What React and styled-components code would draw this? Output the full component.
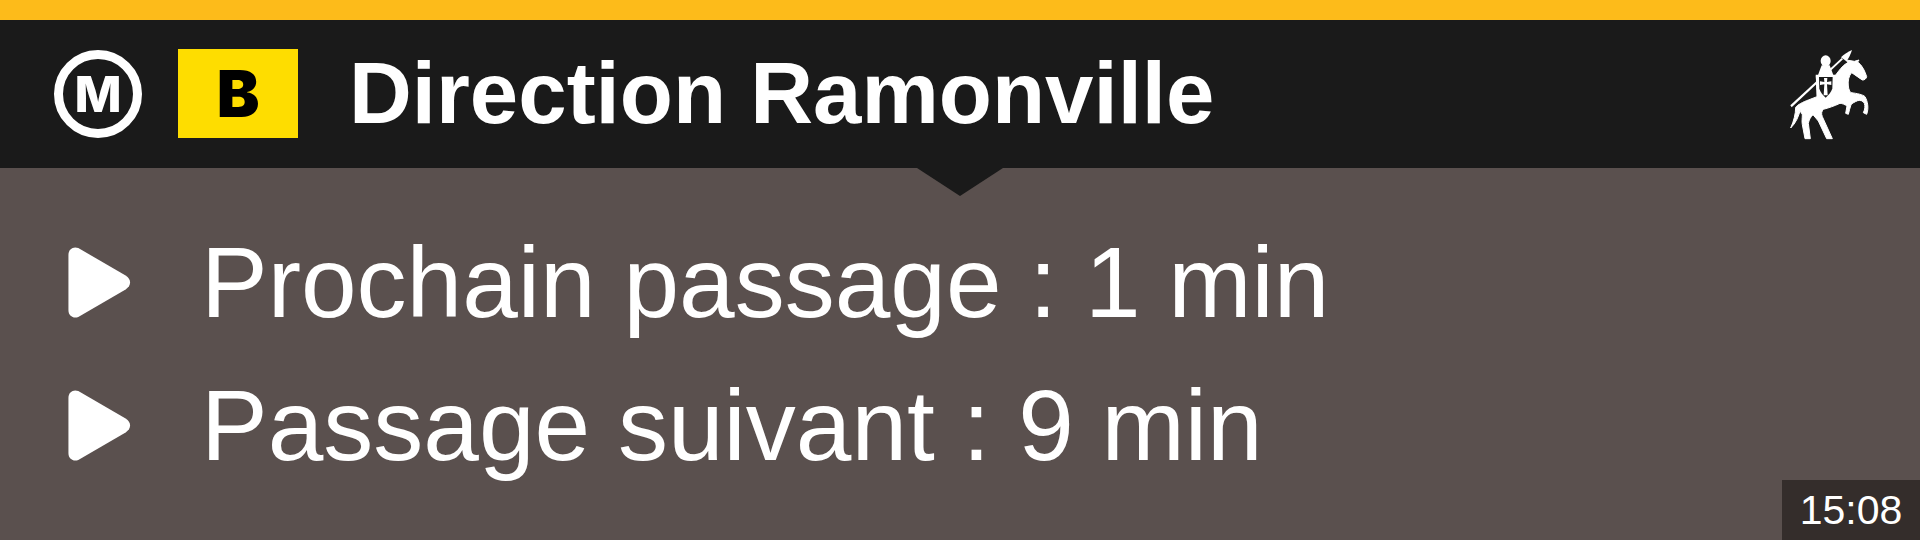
import React from "react";
import styled, { createGlobalStyle } from "styled-components";

const GlobalStyle = createGlobalStyle`
  html, body {
    margin: 0;
    padding: 0;
    background: #5a504e;
    font-family: "Liberation Sans", Arial, sans-serif;
  }
`;

const Screen = styled.div`
  position: relative;
  width: 1920px;
  height: 540px;
  overflow: hidden;
  display: flex;
  flex-direction: column;
  background: #5a504e;
  color: #fff;
`;

const TopLine = styled.div`
  height: 20px;
  background: #fdbb1a;
`;

const Header = styled.header`
  position: relative;
  height: 148px;
  display: flex;
  align-items: center;
  padding: 0 35px 0 54px;
  background: #1a1a1a;

  &::after {
    content: "";
    position: absolute;
    left: 917px;
    top: 148px;
    width: 86px;
    height: 28px;
    background: #1a1a1a;
    clip-path: polygon(0 0, 100% 0, 50% 100%);
  }
`;

const MetroRing = styled.div`
  box-sizing: border-box;
  width: 88px;
  height: 88px;
  border: 9px solid #fff;
  border-radius: 50%;
  display: flex;
  align-items: center;
  justify-content: center;
  font-family: Inter, sans-serif;
  font-size: 50px;
  font-weight: 800;
  line-height: 1;
`;

const LineBadge = styled.div`
  width: 120px;
  height: 89px;
  margin: 0 0 1px 36px;
  display: flex;
  align-items: center;
  justify-content: center;
  background: #fedd00;
  color: #000;
  font-family: Inter, sans-serif;
  font-size: 64px;
  font-weight: 900;
  line-height: 1;
`;

const Title = styled.h1`
  margin: 0 0 4px 51px;
  flex: 1;
  font-size: 87px;
  font-weight: 700;
  line-height: 1;
`;

const Crest = styled.svg`
  width: 100px;
  height: 100px;
  margin-top: 4px;
  flex: none;
`;

const Rows = styled.main`
  display: flex;
  flex-direction: column;
  gap: 43px;
  padding: 64px 0 0 68px;
`;

const Row = styled.div`
  height: 100px;
  display: flex;
  align-items: center;
  gap: 70px;
  font-size: 100px;
  line-height: 1;
`;

const Arrow = styled.svg`
  width: 63px;
  height: 71px;
  margin-top: 1px;
  flex: none;
`;

const Clock = styled.div`
  position: absolute;
  right: 0;
  bottom: 0;
  width: 138px;
  height: 60px;
  display: flex;
  align-items: center;
  justify-content: center;
  background: #342d2b;
  font-size: 41px;
`;

const PlayArrow = () => (
  <Arrow viewBox="0 0 63 72">
    <path
      d="M0 8C0 2 5 -1 10 1L58 29C64 33 64 39 58 43L10 71C5 73 0 70 0 64Z"
      fill="#fff"
    />
  </Arrow>
);

const Knight = () => (
  <Crest viewBox="0 0 300 300">
    <g fill="#fff">
      {/* lance */}
      <path d="M16 178L170 36L174 40L20 184Z" />
      <path d="M168 34C178 24 188 18 201 12C197 24 192 36 184 46Z" />
      {/* rider */}
      <ellipse cx="122" cy="45" rx="15" ry="17" />
      <path d="M110 58L134 58L146 90L98 90Z" />
      {/* horse */}
      <path
        stroke="#fff"
        strokeWidth="3"
        strokeLinejoin="round"
        d="M150 90C162 74 172 58 188 50L184 42L208 46L222 42L218 48C232 58 240 76 245 92C244 98 238 103 232 102C222 96 210 86 200 80C192 88 188 104 190 120C191 130 194 136 198 140C216 142 234 146 240 152C248 166 252 186 245 205L235 200C240 190 241 180 238 172C234 164 226 162 218 164C208 168 202 172 198 176C195 186 192 196 190 205L182 202L186 180C180 176 172 172 165 172C148 180 130 186 115 190C110 196 108 202 112 212L142 278L125 278L100 225L84 206C76 214 72 222 70 232L76 278L60 278L52 236C50 226 52 216 52 206C48 202 46 196 46 190C42 210 32 232 17 246C26 226 32 204 32 184C38 176 54 168 70 162L96 152L94 90Z"
      />
      {/* shield */}
      <path d="M92 86L153 86L151 130C146 142 134 154 122 163C110 154 98 142 95 130Z" />
    </g>
    <path
      d="M102 93L143 93L142 128C138 138 130 148 122 155C114 148 106 138 103 128Z"
      fill="#1a1a1a"
    />
    <path
      d="M117 96L127 96L126 108L139 106L139 117L126 115L128 148L116 148L118 115L105 117L105 106L118 108Z"
      fill="#fff"
    />
  </Crest>
);

const App = () => {
  return (
    <Screen>
      <GlobalStyle />
      <TopLine />
      <Header>
        <MetroRing>M</MetroRing>
        <LineBadge>B</LineBadge>
        <Title>Direction Ramonville</Title>
        <Knight />
      </Header>
      <Rows>
        <Row>
          <PlayArrow />
          Prochain passage : 1 min
        </Row>
        <Row>
          <PlayArrow />
          Passage suivant : 9 min
        </Row>
      </Rows>
      <Clock>15:08</Clock>
    </Screen>
  );
};

export default App;
